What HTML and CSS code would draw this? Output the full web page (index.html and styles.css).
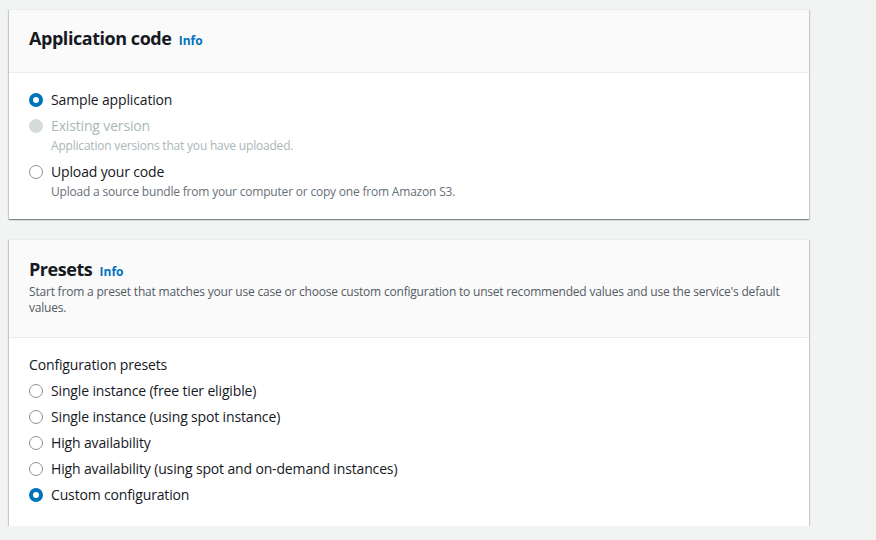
FILE: index.html
```html
<!DOCTYPE html>
<html>
<head>
<meta charset="utf-8">
<link rel="stylesheet" href="styles.css">
</head>
<body>
<div class="page">
  <section class="card">
    <header class="card-header">
      <h2 class="title">Application code <a class="info">Info</a></h2>
    </header>
    <div class="card-body">
      <div class="option">
        <span class="radio checked"></span>
        <div class="opt-text"><div class="label">Sample application</div></div>
      </div>
      <div class="option disabled">
        <span class="radio"></span>
        <div class="opt-text"><div class="label">Existing version</div><div class="desc">Application versions that you have uploaded.</div></div>
      </div>
      <div class="option">
        <span class="radio"></span>
        <div class="opt-text"><div class="label">Upload your code</div><div class="desc">Upload a source bundle from your computer or copy one from Amazon S3.</div></div>
      </div>
    </div>
  </section>

  <section class="card">
    <header class="card-header header2">
      <h2 class="title">Presets <a class="info">Info</a></h2>
      <p class="header-desc">Start from a preset that matches your use case or choose custom configuration to unset recommended values and use the service's default values.</p>
    </header>
    <div class="card-body body2">
      <div class="group-label">Configuration presets</div>
      <div class="option"><span class="radio"></span><div class="opt-text"><div class="label">Single instance (free tier eligible)</div></div></div>
      <div class="option"><span class="radio"></span><div class="opt-text"><div class="label">Single instance (using spot instance)</div></div></div>
      <div class="option"><span class="radio"></span><div class="opt-text"><div class="label">High availability</div></div></div>
      <div class="option"><span class="radio"></span><div class="opt-text"><div class="label">High availability (using spot and on-demand instances)</div></div></div>
      <div class="option"><span class="radio checked"></span><div class="opt-text"><div class="label">Custom configuration</div></div></div>
    </div>
  </section>
</div>
</body>
</html>
```
FILE: styles.css
```css
html, body {
  margin: 0;
  padding: 0;
  background: #f2f3f3;
}
body {
  font-family: "Open Sans", "Noto Sans", sans-serif;
  color: #16191f;
  font-size: 14px;
  letter-spacing: -0.15px;
}
.page {
  padding: 9px 0 0 9px;
  width: 800px;
  display: flex;
  flex-direction: column;
  gap: 20px;
}
.card {
  background: #fff;
  border-top: 1px solid #eaeded;
  box-shadow: 0 1px 1px 0 rgba(0,28,36,.3), 1px 1px 1px 0 rgba(0,28,36,.15), -1px 1px 1px 0 rgba(0,28,36,.15);
}
.card-header {
  background: #fafafa;
  border-bottom: 1px solid #eaeded;
  padding: 17px 20px 23px;
}
.header2 {
  padding: 18px 20px 21px;
}
.title {
  margin: 0;
  font-size: 18px;
  line-height: 22px;
  font-weight: 700;
  letter-spacing: -0.45px;
}
.info {
  color: #0073bb;
  font-size: 12px;
  line-height: 1;
  font-weight: 700;
  margin-left: 3px;
  letter-spacing: 0;
}
.header-desc {
  margin: 4px 0 0;
  font-size: 12px;
  line-height: 16px;
  color: #545b64;
  letter-spacing: -0.2px;
}
.card-body {
  padding: 17px 20px 17px;
  display: flex;
  flex-direction: column;
  gap: 6px;
}
.body2 {
  padding-bottom: 21px;
}
.group-label {
  line-height: 20px;
}
.option {
  display: flex;
  align-items: flex-start;
  gap: 8px;
}
.radio {
  box-sizing: border-box;
  width: 14px;
  height: 14px;
  margin-top: 3px;
  border-radius: 50%;
  border: 1.5px solid #879596;
  background: #fff;
  flex: none;
}
.radio.checked {
  border: 4.5px solid #0073bb;
}
.disabled .radio {
  border-color: #d5dbdb;
  background: #d5dbdb;
}
.label {
  line-height: 20px;
}
.desc {
  font-size: 12px;
  line-height: 20px;
  color: #687078;
  letter-spacing: -0.2px;
}
.disabled .label, .disabled .desc {
  color: #aab7b8;
}
```
